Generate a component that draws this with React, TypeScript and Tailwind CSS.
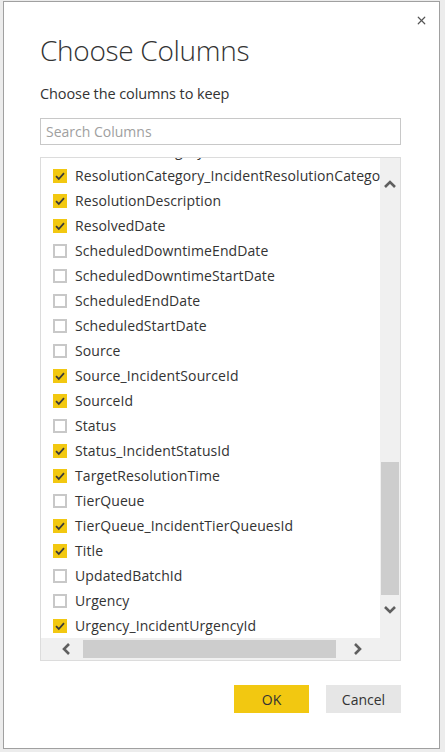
import { X } from 'lucide-react';

const columns: { name: string; checked: boolean }[] = [
  { name: 'ResolutionCategory', checked: true },
  { name: 'ResolutionCategory_IncidentResolutionCategoryId', checked: true },
  { name: 'ResolutionDescription', checked: true },
  { name: 'ResolvedDate', checked: true },
  { name: 'ScheduledDowntimeEndDate', checked: false },
  { name: 'ScheduledDowntimeStartDate', checked: false },
  { name: 'ScheduledEndDate', checked: false },
  { name: 'ScheduledStartDate', checked: false },
  { name: 'Source', checked: false },
  { name: 'Source_IncidentSourceId', checked: true },
  { name: 'SourceId', checked: true },
  { name: 'Status', checked: false },
  { name: 'Status_IncidentStatusId', checked: true },
  { name: 'TargetResolutionTime', checked: true },
  { name: 'TierQueue', checked: false },
  { name: 'TierQueue_IncidentTierQueuesId', checked: true },
  { name: 'Title', checked: true },
  { name: 'UpdatedBatchId', checked: false },
  { name: 'Urgency', checked: false },
  { name: 'Urgency_IncidentUrgencyId', checked: true },
];

function Checkbox({ checked }: { checked: boolean }) {
  if (checked) {
    return (
      <div className="w-[14px] h-[14px] shrink-0 bg-[#f2c811] flex items-center justify-center">
        <svg width="12" height="12" viewBox="0 0 12 12">
          <path d="M2 6.2 L4.8 9 L10 3.2" fill="none" stroke="#3a3a3a" strokeWidth="1.8" />
        </svg>
      </div>
    );
  }
  return <div className="w-[14px] h-[14px] shrink-0 bg-white border-2 border-[#c8c8c8]" />;
}

function Chevron({ dir }: { dir: 'up' | 'down' | 'left' | 'right' }) {
  const d = {
    up: 'M2 9 L7 4 L12 9',
    down: 'M2 5 L7 10 L12 5',
    left: 'M9 2 L4 7 L9 12',
    right: 'M5 2 L10 7 L5 12',
  }[dir];
  return (
    <svg width="14" height="14" viewBox="0 0 14 14">
      <path d={d} fill="none" stroke="#5f5f5f" strokeWidth="2.6" />
    </svg>
  );
}

export default function App() {
  return (
    <div
      className="w-[445px] h-[752px] bg-[#ececec] pt-[1px] pl-[3px] overflow-hidden"
      style={{ fontFamily: '"Open Sans", "Noto Sans", sans-serif' }}
    >
      <div className="relative w-[437px] h-[748px] bg-white border border-[#a0a0a0] pl-[36px] pr-[38px]">
        {/* Close */}
        <button className="absolute right-[11px] top-[12px] text-[#555]">
          <X className="w-[13px] h-[13px]" strokeWidth={2.2} />
        </button>

        {/* Header */}
        <h1 className="mt-[28px] h-[40px] leading-[40px] text-[28px] font-light text-[#333] tracking-[-0.3px]">
          Choose Columns
        </h1>
        <p className="mt-[13px] h-[22px] leading-[22px] text-[14.5px] text-[#333] tracking-[-0.1px]">
          Choose the columns to keep
        </p>

        {/* Search */}
        <div className="mt-[13px] h-[27px] border border-[#c8c8c8] flex items-center px-[5px]">
          <span className="text-[14px] text-[#a0a0a0]">Search Columns</span>
        </div>

        {/* List */}
        <div className="mt-[12px] h-[504px] border border-[#dcdcdc] flex flex-col">
          <div className="flex h-[480px]">
            <div className="flex-1 overflow-hidden">
              <div className="-mt-[20px]">
                {columns.map((c) => (
                  <div key={c.name} className="h-[25px] flex items-center pl-[12px] gap-[8px] whitespace-nowrap">
                    <Checkbox checked={c.checked} />
                    <span className="text-[14px] text-[#333] leading-none tracking-[0.1px]">{c.name}</span>
                  </div>
                ))}
              </div>
            </div>
            {/* vertical scrollbar */}
            <div className="w-[20px] bg-[#f0f0f0] flex flex-col items-center">
              <div className="h-[54px] flex items-center justify-center">
                <Chevron dir="up" />
              </div>
              <div className="h-[250px]" />
              <div className="w-[18px] h-[133px] bg-[#cdcdcd]" />
              <div className="h-[28px] flex items-center justify-center">
                <Chevron dir="down" />
              </div>
            </div>
          </div>
          {/* horizontal scrollbar */}
          <div className="h-[22px] bg-[#f0f0f0] flex items-center">
            <div className="w-[42px] flex items-center justify-center pl-[10px]">
              <Chevron dir="left" />
            </div>
            <div className="w-[253px] h-[18px] bg-[#cdcdcd]" />
            <div className="w-[38px] flex items-center justify-center pl-[4px]">
              <Chevron dir="right" />
            </div>
          </div>
        </div>

        {/* Buttons */}
        <div className="mt-[24px] flex justify-end gap-[17px]">
          <button className="w-[75px] h-[28px] bg-[#f2c811] text-[14px] text-[#333]">OK</button>
          <button className="w-[75px] h-[28px] bg-[#e6e6e6] text-[14px] text-[#333]">Cancel</button>
        </div>
      </div>
    </div>
  );
}
